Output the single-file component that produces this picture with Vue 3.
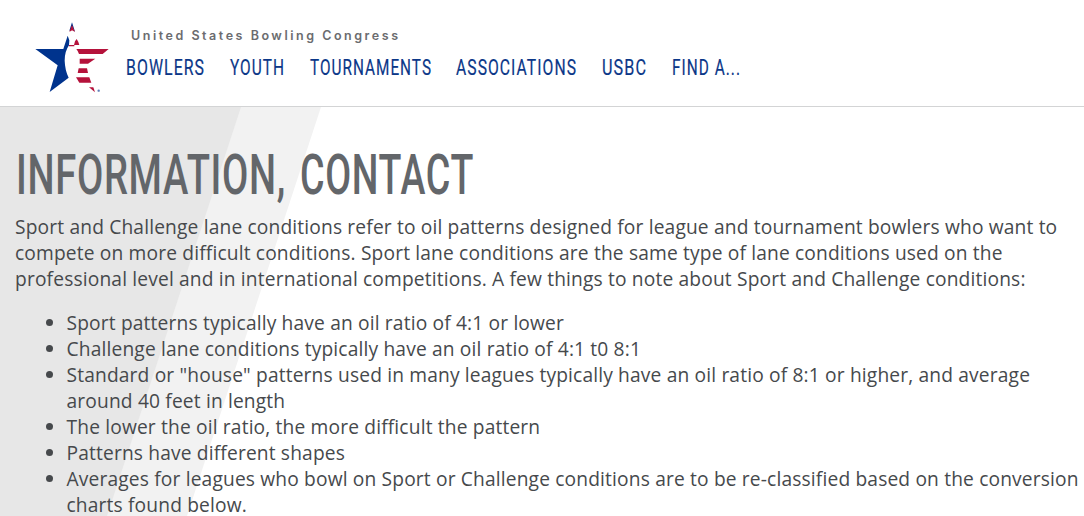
<script setup>
const navItems = [
  { label: "BOWLERS", width: 79 },
  { label: "YOUTH", width: 55 },
  { label: "TOURNAMENTS", width: 122 },
  { label: "ASSOCIATIONS", width: 121 },
  { label: "USBC", width: 45 },
  { label: "FIND A...", width: 69 },
];

const notes = [
  "Sport patterns typically have an oil ratio of 4:1 or lower",
  "Challenge lane conditions typically have an oil ratio of 4:1 t0 8:1",
  'Standard or "house" patterns used in many leagues typically have an oil ratio of 8:1 or higher, and average around 40 feet in length',
  "The lower the oil ratio, the more difficult the pattern",
  "Patterns have different shapes",
  "Averages for leagues who bowl on Sport or Challenge conditions are to be re-classified based on the conversion charts found below.",
];
</script>

<template>
  <div class="page">
    <header class="header">
      <svg class="logo" viewBox="0 0 285 255" aria-label="USBC">
        <path fill="#00338d" d="M31 102H115L128 62L133 76L132 91Q119 109 119 137Q120 166 131 188L74 231L98 151Z" />
        <path fill="#00338d" d="M133 47L141 22L150 50L146 46L141 34L138 46Z" />
        <path fill="#b5123b" d="M141 30L150 51L145 48L141 46L138 48L133 50Z" />
        <path fill="#b5123b" d="M132 90H148V94H132ZM147 90L150 79L155 72L160 81L163 90Z" />
        <path fill="#b5123b" d="M154 102H251L233 117H162Q159 108 154 102Z" />
        <path fill="#b5123b" d="M164 131H211L189 146H164Z" />
        <path fill="#b5123b" d="M161 160H186L189 174H158Z" />
        <path fill="#b5123b" d="M153 187H193L199 203H163Z" />
        <path fill="#b5123b" d="M192 217H205L210 232Z" />
        <circle cx="221" cy="227" r="3.5" fill="#5f7db8" />
      </svg>
      <div class="brand">
        <svg class="tagline" width="268" height="20">
          <text x="0" y="14" textLength="267">United States Bowling Congress</text>
        </svg>
        <nav class="nav">
          <a v-for="item in navItems" :key="item.label">
            <svg :width="item.width" height="28">
              <text x="0" y="22" :textLength="item.width" lengthAdjust="spacingAndGlyphs">{{ item.label }}</text>
            </svg>
          </a>
        </nav>
      </div>
    </header>

    <main class="content">
      <svg class="stripes" viewBox="0 0 1084 409">
        <path fill="#f2f2f2" d="M0 0H321L187 409H0Z" />
        <path fill="#e7e7e7" d="M0 0H241L107 409H0Z" />
      </svg>
      <h1 class="title">
        <svg width="272" height="60">
          <text x="0" y="46.5" textLength="270" lengthAdjust="spacingAndGlyphs">INFORMATION,</text>
        </svg>
        <svg width="174" height="60">
          <text x="0" y="46.5" textLength="174" lengthAdjust="spacingAndGlyphs">CONTACT</text>
        </svg>
      </h1>
      <p class="intro">
        Sport and Challenge lane conditions refer to oil patterns designed for league and tournament bowlers who want to
        compete on more difficult conditions. Sport lane conditions are the same type of lane conditions used on the
        professional level and in international competitions. A few things to note about Sport and Challenge conditions:
      </p>
      <ul class="notes">
        <li v-for="note in notes" :key="note">{{ note }}</li>
      </ul>
    </main>
  </div>
</template>

<style>
body {
  margin: 0;
  overflow: hidden;
}
</style>

<style scoped>
.page {
  width: 1084px;
  height: 516px;
  overflow: hidden;
  background: #fff;
  color: #46494c;
  font-family: "Open Sans", "Noto Sans", sans-serif;
}

.page svg {
  display: block;
  overflow: visible;
}

.header {
  display: flex;
  box-sizing: border-box;
  height: 107px;
  padding: 15px 0 0 25px;
  border-bottom: 1px solid #d3d4d5;
}

.logo {
  width: 95px;
  height: 85px;
}

.brand {
  padding: 11px 0 0 6px;
}

.tagline {
  margin-left: 5px;
}

.tagline text {
  font: 600 12.5px Inter, sans-serif;
  fill: #6b6c6f;
}

.nav {
  display: flex;
  gap: 24.8px;
  margin-top: 7px;
}

.nav text {
  font: 400 22.5px Roboto, sans-serif;
  letter-spacing: 1.5px;
  fill: #0b3788;
  stroke: #0b3788;
  stroke-width: 0.2px;
}

.content {
  position: relative;
  height: 409px;
  padding-left: 15px;
}

/* 背景斜条纹，位于正文下方 */
.stripes {
  position: absolute;
  inset: 0;
  width: 1084px;
  height: 409px;
}

.title {
  position: relative;
  display: flex;
  gap: 12px;
  margin: 0;
  padding: 40px 0 0 0.5px;
}

.title text {
  font: 500 56px Roboto, sans-serif;
  letter-spacing: 1px;
  fill: #63666a;
}

.intro,
.notes {
  position: relative;
  font-size: 19.2px;
  line-height: 26.04px;
  letter-spacing: 0.155px;
}

.intro {
  width: 1060px;
  margin: 7px 0 0;
}

.notes {
  width: 1020px;
  margin: 18px 0 0;
  padding-left: 51.5px;
}
</style>
